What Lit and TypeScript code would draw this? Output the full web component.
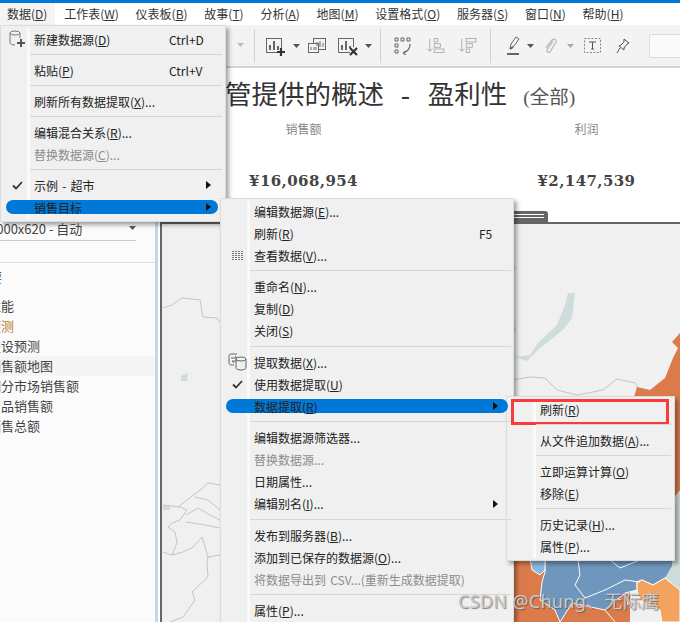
import { LitElement, html, css, svg } from "lit";
import { customElement } from "lit/decorators.js";

type Row = { t?: string; k?: string; sc?: string; s?: boolean; dis?: boolean; hi?: boolean; arrow?: boolean; check?: boolean; icon?: string };

const parseLabel = (t: string) => {
  const m = t.match(/^(.*?\()(.)(\).*)$/);
  return m ? html`${m[1]}<u>${m[2]}</u>${m[3]}` : t;
};

const dbIcon = html`<svg width="22" height="20" viewBox="0 0 22 20" fill="none" stroke="#777" stroke-width="1"><ellipse cx="8" cy="4" rx="5" ry="2"/><path d="M3 4v10c0 1 2 2 5 2M13 4v5"/><path d="M14 10v8M10 14h8" stroke="#555" stroke-width="2"/></svg>`;
const gridIcon = html`<svg width="14" height="10" viewBox="0 0 14 10" stroke="#777" stroke-width="1" stroke-dasharray="2 1"><path d="M1 1.5h12M1 3.5h12M1 5.5h12M1 7.5h12M1 9.5h12"/></svg>`;
const extractIcon = html`<svg width="20" height="18" viewBox="0 0 20 18" fill="none" stroke="#666"><path d="M9 1H3C1.500 1 1 2 1 3v7c0 1 1 2 2 2h3"/><ellipse cx="13" cy="6" rx="5" ry="2"/><path d="M8 6v9c0 1 2 2 5 2s5-1 5-2V6"/><path d="M3 5h6l-2-2M9 8H4l2 2"/></svg>`;
const checkIcon = html`<svg width="11" height="9" viewBox="0 0 11 9" fill="none" stroke="#333" stroke-width="1.800"><path d="M1 4.500l3 3 6-6.500"/></svg>`;

const m1: Row[] = [
  { t: "新建数据源(D)", k: "Ctrl+D", icon: "db" }, { s: true },
  { t: "粘贴(P)", k: "Ctrl+V" }, { s: true },
  { t: "刷新所有数据提取(X)..." }, { s: true },
  { t: "编辑混合关系(R)..." }, { t: "替换数据源(C)...", dis: true }, { s: true },
  { t: "示例 - 超市", arrow: true, check: true }, { t: "销售目标", arrow: true, hi: true },
];
const m2: Row[] = [
  { t: "编辑数据源(E)..." }, { t: "刷新(R)", k: "F5" }, { t: "查看数据(V)...", icon: "grid" }, { s: true },
  { t: "重命名(N)..." }, { t: "复制(D)" }, { t: "关闭(S)" }, { s: true },
  { t: "提取数据(X)...", icon: "ext" }, { t: "使用数据提取(U)", check: true }, { t: "数据提取(R)", arrow: true, hi: true }, { s: true },
  { t: "编辑数据源筛选器..." }, { t: "替换数据源...", dis: true }, { t: "日期属性..." }, { t: "编辑别名(I)...", arrow: true }, { s: true },
  { t: "发布到服务器(B)..." }, { t: "添加到已保存的数据源(O)..." }, { t: "将数据导出到 CSV...(重新生成数据提取)", dis: true }, { s: true },
  { t: "属性(P)..." },
];
const m3: Row[] = [
  { t: "刷新(R)" }, { s: true },
  { t: "从文件追加数据(A)..." }, { s: true },
  { t: "立即运算计算(O)" }, { t: "移除(E)" }, { s: true },
  { t: "历史记录(H)..." }, { t: "属性(P)..." },
];

const menus = ["数据(D)", "工作表(W)", "仪表板(B)", "故事(T)", "分析(A)", "地图(M)", "设置格式(O)", "服务器(S)", "窗口(N)", "帮助(H)"];

const renderMenu = (rows: Row[], cls: string) => html`<div class="menu ${cls}">
  ${rows.map((r) => r.s
    ? html`<div class="sep"></div>`
    : html`<div class="row ${r.dis ? "dis" : ""} ${r.hi ? "hi" : ""}">
        <span class="ic">${r.icon === "db" ? dbIcon : r.icon === "grid" ? gridIcon : r.icon === "ext" ? extractIcon : r.check ? checkIcon : ""}</span>
        <span class="lbl">${parseLabel(r.t!)}</span>
        ${r.k ? html`<span class="key">${r.k}</span>` : ""}
        ${r.arrow ? html`<span class="arr"></span>` : ""}
      </div>`)}
</div>`;

const caret = (dim = false) => html`<svg class="caret" width="7" height="4" viewBox="0 0 7 4"><path d="M0 0h7L3.500 4z" fill="${dim ? "#aaa" : "#555"}"/></svg>`;

const line = (p: string) => svg`<polyline points="${p}" fill="none" stroke="#c4c4c4" stroke-width="1"/>`;

const mapSvg = svg`<svg class="map" width="518" height="398" viewBox="162 224 518 398">
  <rect x="162" y="224" width="518" height="398" fill="#f0f0f0"/>
  <polygon fill="#cfdcdc" points="568,293 575,293 572,318 563,330 540,348 527,361 515,357 530,355 538,343 557,325 565,305"/>
  <polygon fill="#cfdcdc" points="181,376 188,373 187,381 181,381"/>
  <polygon fill="#cfdcdc" points="163,505 170,507 170,510 163,510"/>
  <polygon fill="#cfdcdc" points="513,265 516,268 514,272"/>
  <polygon fill="#cfdcdc" points="513,325 516,328 516,331 513,331"/>
  <polygon fill="#db7b4c" points="680,333 672,342 678,348 673,358 665,378 650,390 637,387 630,410 630,622 510,622 510,560 680,560"/>
  <polygon fill="#cfdcdc" stroke="#fff" points="681,490 675,497 672,566 681,566"/>
  <polygon fill="#6f97bd" stroke="#fff" points="545,558 672,558 680,566 665,578 653,585 642,580 637,582 637,590 625,593 605,610 572,603 560,622 555,610 540,600 542,582 545,572"/>
  <polygon fill="#cfdcdc" points="672,558 680,558 680,590 665,578 672,566"/>
  <polygon fill="#8fb8dc" stroke="#fff" points="530,558 545,558 545,570 540,575 532,570"/>
  <polygon fill="#f4a35f" stroke="#fff" points="637,582 642,580 653,585 665,578 680,590 680,622 662,622 660,610 640,600 637,590"/>
  <polyline fill="none" stroke="#fff" points="578,560 580,575 575,585 585,598 605,590 625,580 640,582"/>
  <polyline fill="none" stroke="#fff" points="610,560 620,568 640,560"/>
  <polyline fill="none" stroke="#fff" points="625,593 628,605 640,600"/>
  <polyline fill="none" stroke="#fff" points="605,610 615,622"/>
  ${line("512,380 530,377 545,378 557,390 577,395 603,390 617,379 635,383 638,387")}
  ${line("163,308 172,305 182,298 200,300 203,317 217,318 220,322")}
  ${line("163,552 172,555 177,543 175,532 168,527 172,523 180,520 187,510 180,507 163,505")}
  ${line("172,555 183,552 192,548 202,537 208,557 220,555")}
  ${line("208,557 207,563 208,577 192,592 195,600 183,617 170,622")}
  ${line("178,507 200,490 208,483 220,485")}
  ${line("195,497 208,500 220,510")}
  ${line("186,515 198,508 210,515 220,520")}
  ${line("186,522 205,525 220,528")}
</svg>`;

@customElement("app-root")
export class AppRoot extends LitElement {
  static styles = css`
    :host { display: block; width: 680px; height: 622px; position: relative; overflow: hidden; background: #fff;
      font-family: "Noto Sans CJK SC", "Noto Sans", sans-serif; font-size: 12px; color: #333; }
    .accent { height: 3px; background: #0078d7; }
    .menubar { height: 22px; display: flex; align-items: center; gap: 16.750px; padding-left: 7px; background: #fff; position: relative; }
    .menubar span { white-space: nowrap; line-height: 22px; }
    .menubar .active::before { content: ""; position: absolute; left: 0; top: 0; width: 55px; height: 22px; background: #f4f4f4; z-index: 0; }
    .menubar b { position: relative; font-weight: 400; }
    .toolbar { height: 41px; background: #f3f3f3; border-bottom: 2px solid #cad6e0; display: flex; align-items: center; padding-left: 229px; }
    .toolbar svg { flex: none; display: block; }
    .tsep { width: 1px; height: 34px; background: #d2d2d2; flex: none; }
    .tinput { width: 40px; height: 22px; background: #fafafa; border: 1px solid #ddd; border-radius: 2px; margin-left: 19px; flex: none; }
    .ml5 { margin-left: 5px; } .ml6 { margin-left: 6px; } .ml7 { margin-left: 7px; } .ml8 { margin-left: 8px; }
    .ml10 { margin-left: 10px; } .ml11 { margin-left: 11px; } .ml12 { margin-left: 12px; } .ml13 { margin-left: 13px; }
    .ml14 { margin-left: 14px; } .ml15 { margin-left: 15px; } .ml16 { margin-left: 16px; }
    .low { margin-top: 3px; }
    .cw { display: flex; }
    .body { display: flex; height: 554px; }
    .side { width: 155px; flex: none; background: #fbfbfb; border-right: 3px solid #c9d6e0; overflow: hidden; display: flex; flex-direction: column; }
    .side-spacer { height: 148px; flex: none; }
    .dd { height: 24px; margin-right: 19px; border-bottom: 1px solid #ccc; display: flex; align-items: center; justify-content: space-between; margin-bottom: 21px; flex: none; color: #444; }
    .dd span { margin-left: -11px; font-size: 13px; white-space: nowrap; }
    .rule { height: 1px; background: #ddd; flex: none; }
    .group { height: 20px; line-height: 20px; margin: 4px 0 9px -24px; font-size: 13px; color: #444; }
    .tab-row { height: 20px; line-height: 20px; font-size: 13px; color: #444; white-space: nowrap; padding-left: 1px; margin-left: -13px; }
    .tab-row.sel { background: #f5f5f5; }
    .tab-row.cur { color: #c0782f; }
    .gap { width: 2px; flex: none; background: #fff; }
    .canvas { flex: 1; min-width: 0; border-left: 2px solid #666; display: flex; flex-direction: column; overflow: hidden; }
    .dash { height: 154px; flex: none; background: #fff; border-bottom: 2px solid #666; position: relative; }
    .title { padding: 8px 0 0 10px; height: 38px; line-height: 38px; font-size: 26.500px; color: #333; white-space: nowrap; font-family: "Liberation Serif", "Noto Sans CJK SC", serif; }
    .title .dash-mark { margin: 0 18px 0 17px; }
    .title small { font-size: 19.500px; color: #555; margin-left: 16px; }
    .kpis { display: grid; grid-template-columns: 283px 283px; margin-top: 6px; }
    .kpi { text-align: center; }
    .kpi .l { font-size: 12px; color: #888; line-height: 18px; }
    .kpi .v { margin-top: 33px; font-family: "DejaVu Serif", serif; font-weight: 700; font-size: 15px; letter-spacing: .4px; color: #444; line-height: 20px; }
    .grip { position: absolute; left: 348px; bottom: 0; width: 38px; height: 11px; background: #666; border-radius: 0 3px 0 0; display: flex; flex-direction: column; gap: 2px; padding: 3px 4px 0 0; box-sizing: border-box; }
    .grip i { display: block; height: 1px; background: #fff; }
    .mapwrap { flex: 1; min-height: 0; }
    .map { display: block; }
    .menu { position: absolute; background: #f0f0f0; border: 1px solid #dcdcdc; box-shadow: 3px 3px 4px rgba(0,0,0,.35); box-sizing: border-box; color: #222; }
    .menu::before { content: ""; position: absolute; top: 2px; bottom: 2px; width: 3px; background: #fafafa; }
    .row { height: 22px; display: flex; align-items: center; white-space: nowrap; position: relative; z-index: 1; }
    .ic { flex: none; display: flex; align-items: center; justify-content: center; }
    .lbl { flex: 1; word-spacing: 1.500px; }
    .key { position: absolute; }
    .row.dis { color: #8c8c8c; }
    .row.hi::before { content: ""; position: absolute; top: 4px; bottom: 4px; background: #0078d7; border-radius: 7px; z-index: -1; }
    .arr { position: absolute; width: 0; height: 0; border-left: 5px solid #111; border-top: 4px solid transparent; border-bottom: 4px solid transparent; }
    .sep { height: 1px; margin-top: 4px; margin-bottom: 4px; background: #d6d6d6; position: relative; z-index: 1; }
    .m1 { left: 0; top: 25px; width: 226px; height: 197px; padding-top: 2px; }
    .m1::before { left: 26px; }
    .m1 .ic { width: 33px; } .m1 .sep { margin-left: 29px; margin-right: 3px; }
    .m1 .row.hi::before { left: 5px; right: 7px; } .m1 .key { left: 168px; } .m1 .arr { left: 205px; }
    .m1 .row { padding-right: 4px; }
    .m2 { left: 220px; top: 198px; width: 294px; height: 430px; padding-top: 1px; }
    .m2::before { left: 26px; }
    .m2 .ic { width: 33px; } .m2 .sep { margin-left: 29px; margin-right: 2px; margin-bottom: 4.500px; }
    .m2 .row.hi::before { left: 5px; right: 5px; } .m2 .key { left: 258px; } .m2 .arr { left: 272px; }
    .m3 { left: 506px; top: 396px; width: 169px; height: 165px; padding-top: 1px; }
    .m3::before { left: 26px; }
    .m3 .ic { width: 33px; } .m3 .sep { margin-left: 29px; margin-right: 3px; }
    .redbox { position: absolute; left: 511px; top: 399px; width: 158px; height: 26px; border: 3px solid #fb3b3b; box-sizing: border-box; }
    .wm { position: absolute; left: 458px; top: 589px; font-size: 18px; line-height: 24px; color: #c9c9c9; text-shadow: 1px 1px 1px rgba(70,70,70,.65); white-space: nowrap; font-family: "Noto Sans", "Noto Sans CJK SC", sans-serif; letter-spacing: .3px; }
  `;

  toolbar() {
    const g = "#666", l = "#aaa";
    return html`<div class="toolbar">
      <svg class="ml8" width="12" height="6"><path d="M0 0h7L3.500 4z" fill="#bbb"/></svg>
      <div class="tsep ml5"></div>
      <svg class="ml11 low" width="20" height="18" viewBox="0 0 20 18" fill="none" stroke="${g}"><rect x=".5" y=".5" width="15" height="14"/><path d="M4 12V7M8 12V3M12 12V8" stroke-width="2"/><path d="M15 10v8M11 14h8" stroke="#333" stroke-width="2.200"/></svg>
      <span class="cw ml7">${caret()}</span>
      <svg class="ml8" width="18" height="16" viewBox="0 0 18 16" fill="none" stroke="${g}"><rect x="5.500" y=".5" width="12" height="11"/><rect x=".5" y="5.500" width="10" height="9" fill="#f3f3f3"/><path d="M9 8V4M12 9V3M15 9V5M3 12V9M6 12V9M8 12V9" stroke-width="1"/></svg>
      <svg class="ml12 low" width="20" height="18" viewBox="0 0 20 18" fill="none" stroke="${g}"><path d="M12 14.500H.5V.5h15V9"/><path d="M4 12V7M8 12V3M12 10V8" stroke-width="2"/><path d="M12 10l7 7M19 10l-7 7" stroke="#333" stroke-width="2.200"/></svg>
      <span class="cw ml7">${caret()}</span>
      <div class="tsep ml8"></div>
      <svg class="ml13" width="18" height="18" viewBox="0 0 18 18" fill="none" stroke="${g}"><path d="M1 1h3v3H1zM7 1h3v3H7zM13 1h3v3h-3zM1 7h3v3H1zM1 13h3v3H1z" stroke-width="1"/><path d="M16 7c0 5-3 8-7 9m0 0l3-2m-3 2l3 2" stroke-width="1.200"/></svg>
      <svg class="ml14" width="19" height="15" viewBox="0 0 20 17" fill="none" stroke="${l}"><path d="M3.500 1v14M.5 12l3 3 3-3"/><rect x="8.500" y=".5" width="4" height="4"/><rect x="8.500" y="6.500" width="7" height="4"/><rect x="8.500" y="12.500" width="11" height="4"/></svg>
      <svg class="ml13" width="19" height="15" viewBox="0 0 20 17" fill="none" stroke="${l}"><path d="M3.500 1v14M.5 12l3 3 3-3"/><rect x="8.500" y=".5" width="11" height="4"/><rect x="8.500" y="6.500" width="7" height="4"/><rect x="8.500" y="12.500" width="4" height="4"/></svg>
      <div class="tsep ml13"></div>
      <svg class="ml16" width="14" height="19" viewBox="0 0 14 19" fill="none" stroke="${g}"><path d="M3 13l1-5 5-7 3 2-5 7z"/><path d="M3 13l3-2" stroke-width="2"/><path d="M0 18h12" stroke-width="2"/></svg>
      <span class="cw ml6">${caret()}</span>
      <svg class="ml10" width="13" height="17" viewBox="0 0 13 17" fill="none" stroke="#bbb" stroke-width="1.300"><path d="M9 4l-6 9c-1 2 2 3 3 2l6-10c1-2-2-4-4-2L2 11"/></svg>
      <span class="cw ml10">${caret(true)}</span>
      <svg class="ml10" width="17" height="15" viewBox="0 0 17 15" fill="none" stroke="#888"><rect x=".5" y=".5" width="16" height="14" stroke-dasharray="2 1.500"/><path d="M5 4h7M8.500 4v7M7 11h3" stroke="#555"/></svg>
      <svg class="ml15" width="14" height="16" viewBox="0 0 14 16" fill="none" stroke="#555"><path d="M8 1l5 4-2 1-3 4 0 2-5-4 2-1 3-3z"/><path d="M4 10l-3 5"/></svg>
      <div class="tinput"></div>
    </div>`;
  }

  render() {
    return html`
      <div class="accent"></div>
      <div class="menubar">
        ${menus.map((m, i) => html`<span class=${i === 0 ? "active" : ""}><b>${parseLabel(m)}</b></span>`)}
      </div>
      ${this.toolbar()}
      <div class="body">
        <div class="side">
          <div class="side-spacer"></div>
          <div class="dd"><span>1000x620 - 自动</span>${caret()}</div>
          <div class="rule"></div>
          <div class="group">概要</div>
          <div class="tab-row">性能</div>
          <div class="tab-row cur">预测</div>
          <div class="tab-row">假设预测</div>
          <div class="tab-row sel">销售额地图</div>
          <div class="tab-row">细分市场销售额</div>
          <div class="tab-row">产品销售额</div>
          <div class="tab-row">销售总额</div>
        </div>
        <div class="gap"></div>
        <div class="canvas">
          <div class="dash">
            <div class="title">为主管提供的概述<span class="dash-mark">-</span>盈利性<small>(全部)</small></div>
            <div class="kpis">
              <div class="kpi"><div class="l">销售额</div><div class="v">¥16,068,954</div></div>
              <div class="kpi"><div class="l">利润</div><div class="v">¥2,147,539</div></div>
            </div>
            <div class="grip"><i></i><i></i></div>
          </div>
          <div class="mapwrap">${mapSvg}</div>
        </div>
      </div>
      ${renderMenu(m1, "m1")}
      ${renderMenu(m2, "m2")}
      ${renderMenu(m3, "m3")}
      <div class="redbox"></div>
      <div class="wm">CSDN @Chung、无际鹰</div>
    `;
  }
}
